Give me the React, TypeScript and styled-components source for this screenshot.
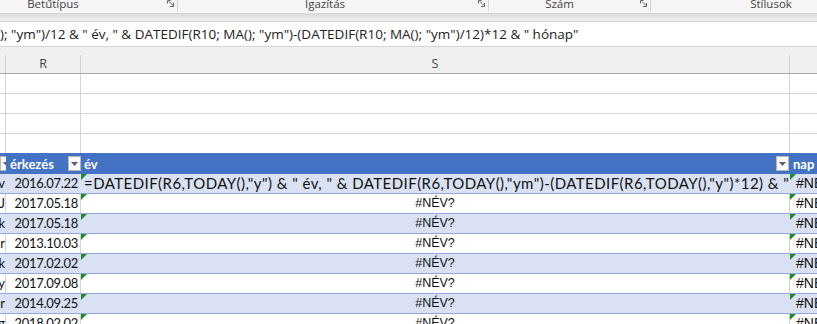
import React from "react";
import styled, { createGlobalStyle } from "styled-components";

const Global = createGlobalStyle`
  html, body { margin: 0; padding: 0; background: #fff; overflow: hidden; }
  body { width: 817px; height: 324px; }
`;

const Page = styled.div`
  width: 817px;
  height: 324px;
  overflow: hidden;
  display: flex;
  flex-direction: column;
  background: #f0f0f0;
`;

const Ribbon = styled.div`
  flex: none;
  height: 13px;
  display: flex;
  margin-left: -59px;
  background: #f5f5f5;
  overflow: hidden;
  font-family: "Open Sans", "Noto Sans", sans-serif;
  font-size: 11.5px;
  color: #444;
`;

const Group = styled.div<{ $w: number }>`
  flex: none;
  width: ${(p) => p.$w}px;
  display: flex;
  align-items: flex-start;
`;

const GroupLabel = styled.div<{ $pr?: number }>`
  flex: 1;
  text-align: center;
  line-height: 14px;
  margin-top: -3px;
  padding-right: ${(p) => p.$pr ?? 0}px;
  white-space: nowrap;
`;

const Launcher = styled.div`
  flex: none;
  width: 12px;
  height: 8px;
  display: flex;
  align-items: flex-start;
  justify-content: center;
`;

const GroupDivider = styled.div`
  flex: none;
  width: 1px;
  height: 11px;
  background: #d4d4d4;
`;

const Band = styled.div`
  flex: none;
  height: 8px;
  background: linear-gradient(#d6d6d6 0%, #e2e2e2 35%, #ebebeb 70%, #ededed 100%);
`;

const FormulaBar = styled.div`
  flex: none;
  height: 24px;
  background: #fff;
  border-top: 1px solid #d4d4d4;
  border-bottom: 1px solid #d4d4d4;
  display: flex;
  align-items: center;
  padding-left: 0;
  font-family: "Open Sans", "Noto Sans", sans-serif;
  font-size: 13.5px;
  color: #222;
  white-space: nowrap;
  overflow: hidden;
`;

const Gap = styled.div`
  flex: none;
  height: 8px;
  background: #f0f0f0;
`;

const COLS = "6px 75px 709px 1fr";

const ColHeaderRow = styled.div`
  flex: none;
  display: grid;
  grid-template-columns: ${COLS};
  height: 18px;
  background: #f0f0f0;
  border-bottom: 1px solid #a8a8a8;
  font-family: "Open Sans", "Noto Sans", sans-serif;
  font-size: 12.5px;
  color: #444;
`;

const ColHeaderCell = styled.div<{ $last?: boolean }>`
  display: flex;
  align-items: center;
  justify-content: center;
  border-right: ${(p) => (p.$last ? "none" : "1px solid #d2d2d2")};
  line-height: 18px;
`;

const Body = styled.div`
  flex: 1;
  display: flex;
  flex-direction: column;
  background: #fff;
  font-family: "Lato", "Liberation Sans", sans-serif;
  font-size: 13px;
  color: #111;
`;

const Row = styled.div<{ $h: number; $bg: string; $line?: string }>`
  flex: none;
  display: grid;
  grid-template-columns: ${COLS};
  height: ${(p) => p.$h}px;
  background: ${(p) => p.$bg};
  border-bottom: ${(p) => (p.$line ? `1px solid ${p.$line}` : "none")};
  box-sizing: border-box;
`;

const Cell = styled.div<{
  $align?: "left" | "right" | "center";
  $pl?: number;
  $pr?: number;
  $grid?: string;
}>`
  position: relative;
  display: flex;
  align-items: flex-end;
  justify-content: ${(p) =>
    p.$align === "right" ? "flex-end" : p.$align === "center" ? "center" : "flex-start"};
  padding-left: ${(p) => p.$pl ?? 0}px;
  padding-right: ${(p) => p.$pr ?? 0}px;
  padding-bottom: 2px;
  border-right: ${(p) => (p.$grid ? `1px solid ${p.$grid}` : "none")};
  overflow: hidden;
  white-space: nowrap;
  min-width: 0;
  line-height: 16px;
`;

const HeadCell = styled(Cell)`
  color: #fff;
  font-weight: 700;
  align-items: center;
  padding-bottom: 0;
`;

const HeadText = styled.span`
  flex: 1;
  overflow: hidden;
`;

const DropButton = styled.div<{ $mr: number }>`
  flex: none;
  width: 13px;
  height: 15px;
  margin-right: ${(p) => p.$mr}px;
  box-sizing: border-box;
  background: #fbfbfb;
  border: 1px solid #b8b8b8;
  display: flex;
  align-items: center;
  justify-content: center;
`;

const DateText = styled.span`
  letter-spacing: -0.3px;
`;

const FormulaText = styled.span`
  font-size: 15px;
  letter-spacing: 0.45px;
`;

const ErrorText = styled.span<{ $size?: number }>`
  font-family: "Liberation Sans", sans-serif;
  font-size: ${(p) => p.$size ?? 12.5}px;
`;

const ErrMark = styled.div`
  position: absolute;
  top: 0;
  left: 0;
  width: 0;
  height: 0;
  border-top: 6px solid #1f8a2a;
  border-right: 6px solid transparent;
`;

const LauncherIcon = () => (
  <svg width="8" height="7" viewBox="0 0 8 7" fill="none">
    <path d="M0.5 0.5H3.5M0.5 0.5V3.5" stroke="#666" strokeWidth="1" />
    <path d="M2 1.5L6.5 6" stroke="#666" strokeWidth="1" />
    <path d="M6.5 3V6.5H3" stroke="#666" strokeWidth="1" />
  </svg>
);

const DropArrow = () => (
  <svg width="7" height="4" viewBox="0 0 7 4">
    <path d="M0 0H7L3.5 4Z" fill="#606060" />
  </svg>
);

const BLUE = "#d9e1f2";
const LINE = "#8ea9db";
const GRID = "#d4d4d4";

const rows = [
  { q: "v", date: "2016.07.22" },
  { q: "J", date: "2017.05.18" },
  { q: "k", date: "2017.05.18" },
  { q: "r", date: "2013.10.03" },
  { q: "k", date: "2017.02.02" },
  { q: "y", date: "2017.09.08" },
  { q: "r", date: "2014.09.25" },
  { q: "g", date: "2018.02.02" },
];

const FORMULA_BAR =
  '); "ym")/12 & " év, " & DATEDIF(R10; MA(); "ym")-(DATEDIF(R10; MA(); "ym")/12)*12 & " hónap"';

const CELL_FORMULA =
  '=DATEDIF(R6,TODAY(),"y") & " év, " & DATEDIF(R6,TODAY(),"ym")-(DATEDIF(R6,TODAY(),"y")*12) & " hónap"';

export default function App() {
  return (
    <>
      <Global />
      <Page>
        <Ribbon>
          <Group $w={237}>
            <GroupLabel>Betűtípus</GroupLabel>
            <Launcher>
              <LauncherIcon />
            </Launcher>
            <GroupDivider />
          </Group>
          <Group $w={311}>
            <GroupLabel $pr={4}>Igazítás</GroupLabel>
            <Launcher>
              <LauncherIcon />
            </Launcher>
            <GroupDivider />
          </Group>
          <Group $w={162}>
            <GroupLabel $pr={8}>Szám</GroupLabel>
            <Launcher>
              <LauncherIcon />
            </Launcher>
            <GroupDivider />
          </Group>
          <Group $w={240}>
            <GroupLabel>Stílusok</GroupLabel>
          </Group>
        </Ribbon>
        <Band />
        <FormulaBar>{FORMULA_BAR}</FormulaBar>
        <Gap />
        <ColHeaderRow>
          <ColHeaderCell />
          <ColHeaderCell>R</ColHeaderCell>
          <ColHeaderCell>S</ColHeaderCell>
          <ColHeaderCell $last />
        </ColHeaderRow>
        <Body>
          {[0, 1, 2, 3].map((i) => (
            <Row key={i} $h={i === 3 ? 19 : 20} $bg="#fff" $line={i === 3 ? undefined : GRID}>
              <Cell $grid={GRID} />
              <Cell $grid={GRID} />
              <Cell $grid={GRID} />
              <Cell />
            </Row>
          ))}
          <Row $h={21} $bg="#4472c4">
            <HeadCell $pr={1}>
              <HeadText />
              <DropButton $mr={0}>
                <DropArrow />
              </DropButton>
            </HeadCell>
            <HeadCell $pl={4}>
              <HeadText>érkezés</HeadText>
              <DropButton $mr={0}>
                <DropArrow />
              </DropButton>
            </HeadCell>
            <HeadCell $pl={3}>
              <HeadText>év</HeadText>
              <DropButton $mr={1}>
                <DropArrow />
              </DropButton>
            </HeadCell>
            <HeadCell $pl={3}>
              <HeadText>nap</HeadText>
            </HeadCell>
          </Row>
          {rows.map((r, i) => {
            const blue = i % 2 === 0;
            const g = blue ? BLUE : GRID;
            return (
              <Row key={i} $h={20} $bg={blue ? BLUE : "#fff"} $line={LINE}>
                <Cell $align="right" $grid={g}>
                  {r.q}
                </Cell>
                <Cell $align="right" $pr={2} $grid={g}>
                  <DateText>{r.date}</DateText>
                </Cell>
                <Cell
                  $align={i === 0 ? "left" : "center"}
                  $pl={i === 0 ? 3 : 0}
                  $grid={g}
                >
                  <ErrMark />
                  {i === 0 ? <FormulaText>{CELL_FORMULA}</FormulaText> : <ErrorText>#NÉV?</ErrorText>}
                </Cell>
                <Cell $pl={6}>
                  <ErrMark />
                  <ErrorText $size={14}>#NÉV?</ErrorText>
                </Cell>
              </Row>
            );
          })}
        </Body>
      </Page>
    </>
  );
}
